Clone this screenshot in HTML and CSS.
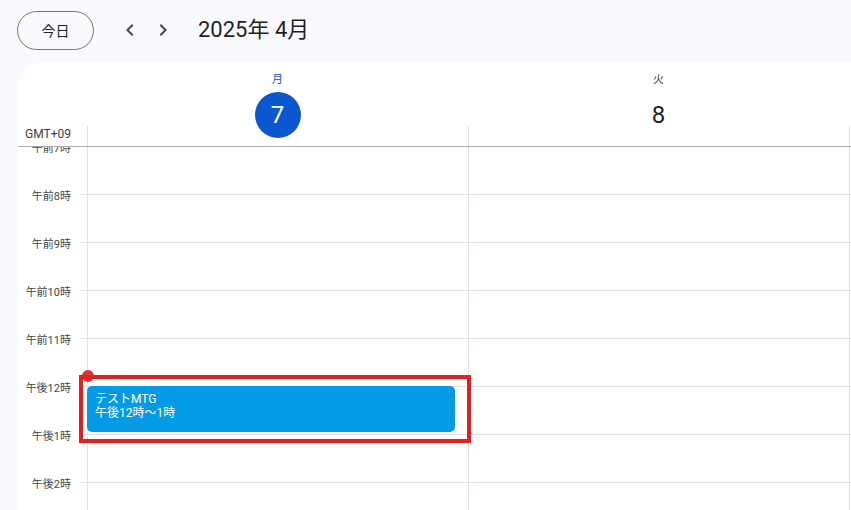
FILE: index.html
```html
<!DOCTYPE html>
<html lang="ja">
<head>
<meta charset="utf-8">
<title>カレンダー</title>
<link rel="stylesheet" href="styles.css">
</head>
<body>
<div class="toolbar">
  <button class="today">今日</button>
  <button class="nav prev" aria-label="前の週">
    <svg width="24" height="24" viewBox="0 0 24 24"><path d="M15.4 7.4 14 6l-6 6 6 6 1.4-1.4L10.8 12z" fill="#444746"/></svg>
  </button>
  <button class="nav next" aria-label="次の週">
    <svg width="24" height="24" viewBox="0 0 24 24"><path d="M8.6 16.6 10 18l6-6-6-6-1.4 1.4 4.6 4.6z" fill="#444746"/></svg>
  </button>
  <h1 class="title">2025年 4月</h1>
</div>
<div class="card">
  <div class="head">
    <div class="tz">GMT+09</div>
    <div class="day-head">
      <div class="dow today-dow">月</div>
      <div class="date today-date">7</div>
    </div>
    <div class="day-head">
      <div class="dow">火</div>
      <div class="date">8</div>
    </div>
    <div class="day-head"></div>
  </div>
  <div class="body">
    <div class="labels">
      <div class="label">午前7時</div>
      <div class="label">午前8時</div>
      <div class="label">午前9時</div>
      <div class="label">午前10時</div>
      <div class="label">午前11時</div>
      <div class="label">午後12時</div>
      <div class="label">午後1時</div>
      <div class="label">午後2時</div>
    </div>
    <div class="ticks">
      <div class="slot"></div><div class="slot"></div><div class="slot"></div>
      <div class="slot"></div><div class="slot"></div><div class="slot"></div>
      <div class="slot"></div><div class="slot"></div>
    </div>
    <div class="col">
      <div class="slot"></div><div class="slot"></div><div class="slot"></div>
      <div class="slot"></div><div class="slot"></div><div class="slot"></div>
      <div class="slot"></div><div class="slot"></div>
      <div class="event">
        <div class="ev-title">テストMTG</div>
        <div class="ev-time">午後12時～1時</div>
      </div>
    </div>
    <div class="col">
      <div class="slot"></div><div class="slot"></div><div class="slot"></div>
      <div class="slot"></div><div class="slot"></div><div class="slot"></div>
      <div class="slot"></div><div class="slot"></div>
    </div>
    <div class="col">
      <div class="slot"></div><div class="slot"></div><div class="slot"></div>
      <div class="slot"></div><div class="slot"></div><div class="slot"></div>
      <div class="slot"></div><div class="slot"></div>
    </div>
    <div class="now-dot"></div>
    <div class="highlight"></div>
  </div>
</div>
</body>
</html>
```
FILE: styles.css
```css
* { box-sizing: border-box; }
html, body { margin: 0; padding: 0; }
body {
  background: #f8fafd;
  font-family: Roboto, "Noto Sans CJK JP", sans-serif;
  color: #1f1f1f;
  width: 851px;
  height: 510px;
  overflow: hidden;
}
.toolbar {
  height: 60px;
  display: flex;
  align-items: center;
  padding-left: 17px;
}
.today {
  width: 77px;
  height: 39px;
  border: 1px solid #747775;
  border-radius: 20px;
  background: transparent;
  font-family: Roboto, "Noto Sans CJK JP", sans-serif;
  font-size: 14px;
  color: #1f1f1f;
  padding: 0;
  margin-right: 24px;
}
.nav {
  width: 24px;
  height: 24px;
  padding: 0;
  border: 0;
  background: transparent;
  display: flex;
  align-items: center;
  justify-content: center;
}
.nav svg { display: block; }
.prev { margin-right: 9px; }
.next { margin-right: 23px; }
.title {
  margin: 0;
  font-size: 22px;
  font-weight: 400;
  color: #1f1f1f;
  line-height: 28px;
}
.card {
  margin-top: 2px;
  margin-left: 18px;
  height: 448px;
  background: #fff;
  border-top-left-radius: 26px;
  overflow: hidden;
}
.head {
  display: flex;
  height: 85px;
  border-bottom: 1px solid #a9adb3;
}
.tz {
  width: 69px;
  flex-shrink: 0;
  align-self: flex-end;
  text-align: right;
  padding-right: 16px;
  padding-bottom: 4px;
  font-size: 12px;
  line-height: 16px;
  color: #3c4043;
}
.day-head {
  width: 381px;
  flex-shrink: 0;
  position: relative;
  display: flex;
  flex-direction: column;
  align-items: center;
  padding-top: 10px;
}
.day-head::before {
  content: "";
  position: absolute;
  left: 0;
  bottom: 0;
  width: 1px;
  height: 20px;
  background: #dde3ea;
}
.dow {
  font-size: 11px;
  line-height: 16px;
  color: #444746;
}
.today-dow { color: #0b57d0; }
.date {
  margin-top: 4px;
  width: 46px;
  height: 46px;
  border-radius: 50%;
  display: flex;
  align-items: center;
  justify-content: center;
  font-size: 24px;
  color: #1f1f1f;
}
.today-date {
  background: #0b57d0;
  color: #fff;
}
.body {
  position: relative;
  display: flex;
  height: 363px;
  overflow: hidden;
}
.labels {
  width: 61px;
  flex-shrink: 0;
  margin-top: -22px;
}
.label {
  height: 48px;
  line-height: 48px;
  text-align: right;
  padding-right: 8px;
  font-size: 11px;
  color: #444746;
  white-space: nowrap;
}
.ticks {
  width: 8px;
  flex-shrink: 0;
}
.slot {
  height: 48px;
  border-bottom: 1px solid #dde3ea;
}
.col {
  width: 381px;
  flex-shrink: 0;
  border-left: 1px solid #dde3ea;
  position: relative;
}
.event {
  position: absolute;
  left: -1px;
  top: 239px;
  width: 368px;
  height: 46px;
  background: #039be5;
  border-radius: 5px;
  color: #fff;
  font-size: 12px;
  line-height: 14px;
  padding: 6px 8px;
}
.now-dot {
  position: absolute;
  left: 64px;
  top: 223px;
  width: 12px;
  height: 12px;
  border-radius: 50%;
  background: #db372d;
}
.highlight {
  position: absolute;
  left: 61px;
  top: 228px;
  width: 392px;
  height: 68px;
  border: 4px solid #e31e1e;
}
```
